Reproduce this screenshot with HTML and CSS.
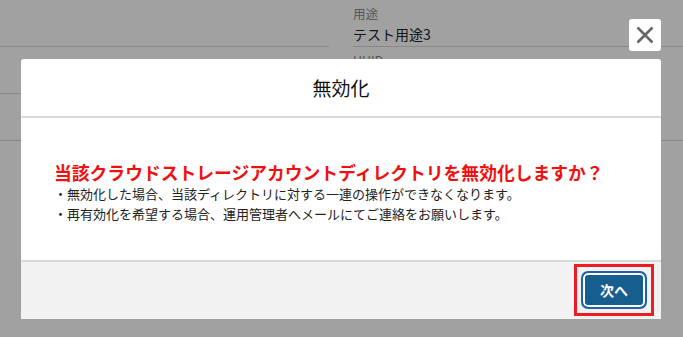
FILE: index.html
```html
<!DOCTYPE html>
<html lang="ja">
<head>
  <meta charset="UTF-8">
  <meta name="viewport" content="width=device-width, initial-scale=1.0">
  <title>無効化</title>
  <link rel="stylesheet" href="styles.css">
</head>
<body>
  <!-- 背面の詳細画面 -->
  <div class="page">
    <div class="col">
      <div class="field"></div>
      <div class="field"></div>
      <div class="field"></div>
    </div>
    <div class="col">
      <div class="field">
        <div class="label">用途</div>
        <div class="value">テスト用途3</div>
      </div>
      <div class="field tall">
        <div class="label">UUID</div>
      </div>
    </div>
  </div>

  <div class="overlay">
    <button class="close" aria-label="閉じる">
      <svg width="18" height="18" viewBox="0 0 18 18">
        <path d="M1.5 1.5 L16.5 16.5 M16.5 1.5 L1.5 16.5" stroke="#666" stroke-width="2.6" fill="none"/>
      </svg>
    </button>

    <div class="modal">
      <div class="modal-header">無効化</div>
      <div class="modal-body">
        <div class="warn">当該クラウドストレージアカウントディレクトリを無効化しますか？</div>
        <div class="note">・無効化した場合、当該ディレクトリに対する一連の操作ができなくなります。</div>
        <div class="note">・再有効化を希望する場合、運用管理者へメールにてご連絡をお願いします。</div>
      </div>
      <div class="modal-footer">
        <div class="mark">
          <button class="next">次へ</button>
        </div>
      </div>
    </div>
  </div>
</body>
</html>
```

FILE: styles.css
```css
body {
  font-family: "Noto Sans CJK JP", "Liberation Sans", sans-serif;
  margin: 0;
  padding: 0;
  width: 683px;
  height: 337px;
  overflow: hidden;
  background-color: #fff;
  color: #333;
}

.page {
  display: grid;
  grid-template-columns: 329px 330px;
  column-gap: 24px;
}

.field {
  height: 46px;
  border-bottom: 1px solid #d8d8d8;
}

.field.tall {
  height: 93px;
}

.label {
  font-size: 12.5px;
  color: #888;
  line-height: 16px;
  padding-top: 6px;
}

.value {
  font-size: 14px;
  line-height: 20px;
  color: #222;
  margin-top: 2px;
}

.overlay {
  position: fixed;
  inset: 0;
  background: rgba(0, 0, 0, 0.37);
  display: flex;
  flex-direction: column;
  align-items: flex-start;
  padding: 19px 0 0 21px;
}

.close {
  width: 32px;
  height: 32px;
  margin-left: 608px;
  margin-bottom: 8px;
  border: none;
  border-radius: 3px;
  background: #fff;
  padding: 0;
  display: flex;
  align-items: center;
  justify-content: center;
}

.modal {
  width: 640px;
  background: #fff;
  border-radius: 3px 3px 0 0;
}

.modal-header {
  height: 57px;
  line-height: 57px;
  text-align: center;
  font-size: 19px;
  color: #111;
  border-bottom: 2px solid #d9d9d9;
}

.modal-body {
  height: 142px;
  box-sizing: border-box;
  padding: 42px 0 0 33px;
}

.warn {
  font-size: 17.8px;
  font-weight: bold;
  color: #f01010;
  line-height: 24px;
  white-space: nowrap;
}

.note {
  font-size: 13px;
  line-height: 20px;
  color: #222;
  white-space: nowrap;
}

.modal-footer {
  height: 59px;
  box-sizing: border-box;
  border-top: 2px solid #d9d9d9;
  background: #f2f2f2;
  display: flex;
  justify-content: flex-end;
  align-items: flex-start;
  padding: 2px 7px 0 0;
}

.mark {
  border: 3px solid #ec1c24;
  padding: 4px;
  display: flex;
}

.next {
  width: 66px;
  height: 38px;
  border: 2px solid #1b62b3;
  border-radius: 7px;
  background: #155e8e;
  box-shadow: inset 0 0 0 2px #fff;
  color: #fff;
  font-family: inherit;
  font-size: 14px;
  font-weight: bold;
  padding: 0;
}
```
